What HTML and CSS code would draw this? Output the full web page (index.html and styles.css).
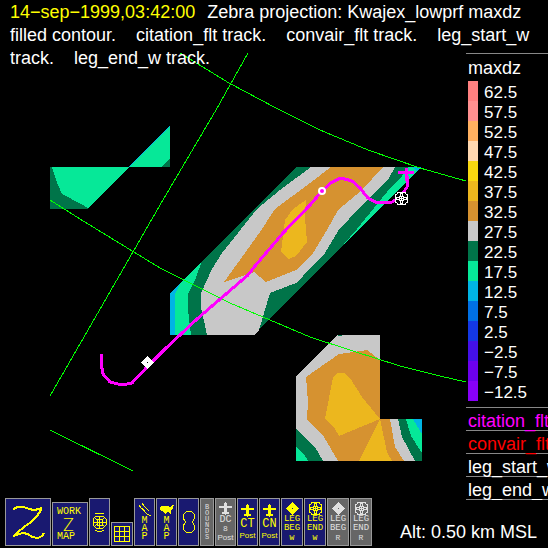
FILE: index.html
```html
<!DOCTYPE html>
<html lang="en">

<head>
    <meta charset="utf-8" />
    <title>Zebra</title>
    <meta name="viewport" content="width=device-width, initial-scale=1">
    <link rel="stylesheet" href="styles.css">
</head>

<body>
    <svg class="defs" aria-hidden="true">
        <symbol id="plane" viewBox="0 0 13 13">
            <path d="M6 0h1v1h1v3h5v2h-5v4h2v2h-3v1h-1v-1h-3v-2h2v-4h-5v-2h5v-3h1z" />
        </symbol>
        <symbol id="leg-beg" viewBox="0 0 13 13">
            <path d="M6 0h1v1h1v1h1v1h1v1h1v1h1v1h1v1h-1v1h-1v1h-1v1h-1v1h-1v1h-1v1h-1v-1h-1v-1h-1v-1h-1v-1h-1v-1h-1v-1h-1v-1h1v-1h1v-1h1v-1h1v-1h1v-1h1z M6 6v1h1v-1z" fill-rule="evenodd" />
        </symbol>
        <symbol id="leg-end" viewBox="0 0 13 13">
            <path d="M2 0h9v2h2v9h-2v2h-9v-2h-2v-9h2z M3 1v1h-1v1h-1v2h3v-1h1v-3z M8 1v3h1v1h3v-2h-1v-1h-1v-1z M1 8v2h1v1h1v1h2v-3h-1v-1z M9 8v1h-1v3h2v-1h1v-1h1v-2z M6 2v2h1v-2z M6 9v2h1v-2z M2 6v1h2v-1z M9 6v1h2v-1z M5 5v1h1v-1z M7 5v1h1v-1z M5 7v1h1v-1z M7 7v1h1v-1z" fill-rule="evenodd" />
        </symbol>
    </svg>

    <header class="title">
        <time>14−sep−1999,03:42:00</time>
        <span class="field">Zebra projection: Kwajex_lowprf maxdz filled contour.</span>
        <span class="field">citation_flt track.</span>
        <span class="field">convair_flt track.</span>
        <span class="field">leg_start_w track.</span>
        <span class="field">leg_end_w track.</span>
    </header>

    <main class="display">
        <svg class="map" viewBox="0 0 466 500" role="img" aria-label="maxdz filled contour">
            <!-- west cell -->
            <g shape-rendering="crispEdges">
                <path class="c22" d="M50 167H129L88 209H50z" />
                <path class="c17" d="M52 167H129L88 208L81 204L62 194L56 180z" />
                <path class="c17" d="M129 167L170 126V167z" />
                <path class="c22" d="M161 167L170 158V167z" />
                <path class="edge" d="M129 167L170 126" />
            </g>
            <!-- main cell -->
            <g shape-rendering="crispEdges">
                <path class="c22" d="M170 293L296 167H421L254 335H170z" />
                <path class="c12" d="M170 293L181 282L175 294V335H170z" />
                <path class="c17" d="M181 282L202 261L195 280L188 294V310L191 335H175V294z" />
                <path class="c17" d="M408 167H421L337 252L357 229L378 203L391 187L402 176z" />
                <path class="c12" d="M412 167H421L417 171z" />
                <path class="c27" d="M311 167H395L388 180L360 207L338 231L325 253L303 276L296 283L270 293L259 330L254 335H207L205 325L201 308V293L212 269L222 253L257 209L280 190z" />
                <path class="c32" d="M331 167H383L362 190L338 210L327 230L313 253L296 270L266 282L254 272L224 282L245 253L260 232L275 209L310 183z" />
                <path class="c37" d="M306 200L293 209L285 220L281 252L289 259L296 256L307 242L305 218z" />
            </g>
            <!-- south cell -->
            <g shape-rendering="crispEdges">
                <path class="c27" d="M296 377L337 335H380V419H422V461H296z" />
                <path class="c22" d="M338 335H342L341 336H337z" />
                <path class="c32" d="M306 377L339 354L367 350L380 360V419H390L395 447L404 461H338L324 437L307 419L308 402z" />
                <path class="c37" d="M333 377L338 373H344L350 378L362 397L380 419L339 436L334 427L325 419z" />
                <path class="c37" d="M380 419L359 461H392L387 452z" />
                <path class="c22" d="M398 419H422V461H415L402 437z" />
                <path class="c17" d="M406 419H422V453L411 436z" />
                <path class="c12" d="M413 419H422V434z" />
                <path class="c22" d="M296 429L315 447L323 461H296z" />
                <path class="c17" d="M296 447L304 454L308 461H296z" />
            </g>
            <!-- lat/lon grid -->
            <g class="grid">
                <path d="M180 53L229 83L274 107L320 130L368 150L420 168L466 181" />
                <path d="M248 53L216 110L160 205L50 396" />
                <path d="M50 200L80 219L160 268L230 303L310 337L353 351L400 366L440 376L466 382" />
                <path d="M50 430L133 471" />
            </g>
            <!-- aircraft track -->
            <path class="track" d="M102 354L101 363L103 374L110 382L122 385L132 383L147 367L165 349L197 319L248 275L255 266L283 233L310 205L322 191L332 182L341 178L352 181L360 188L368 198L377 203L392 202L401 196L407 187V176L406 168" />
            <path class="track" d="M398 172H414M406 168V181" />
            <circle class="fix" cx="322" cy="191" r="3" />
            <use href="#leg-beg" class="marker" x="141" y="356" width="13" height="13" />
            <rect x="396" y="193" width="11" height="11" />
            <use href="#leg-end" class="marker" x="395" y="192" width="13" height="13" />
        </svg>

        <aside class="legend">
            <section class="scale">
                <h2>maxdz</h2>
                <ul>
                    <li class="s62">62.5</li>
                    <li class="s57">57.5</li>
                    <li class="s52">52.5</li>
                    <li class="s47">47.5</li>
                    <li class="s42">42.5</li>
                    <li class="s37">37.5</li>
                    <li class="s32">32.5</li>
                    <li class="s27">27.5</li>
                    <li class="s22">22.5</li>
                    <li class="s17">17.5</li>
                    <li class="s12">12.5</li>
                    <li class="s7">7.5</li>
                    <li class="s2">2.5</li>
                    <li class="sm2">−2.5</li>
                    <li class="sm7">−7.5</li>
                    <li class="sm12">−12.5</li>
                </ul>
            </section>
            <ul class="tracks">
                <li class="citation">citation_flt</li>
                <li class="convair">convair_flt</li>
                <li>leg_start_w</li>
                <li>leg_end_w</li>
            </ul>
        </aside>
    </main>

    <footer class="toolbar">
        <button class="tool logo" aria-label="Zebra">
            <svg width="34" height="34" viewBox="0 0 34 34">
                <path class="thick" d="M2 5L4 3L7 2H13L18 4L23 5L28 4L31 3M30 3V5L26 11L20 17L13 22L7 27L2 32M2 31L5 30L12 28L17 29L21 32L27 33L31 31L33 28" />
            </svg>
        </button>
        <button class="tool work">
            <span>WORK</span>
            <span class="big">Z</span>
            <span>MAP</span>
        </button>
        <button class="tool" aria-label="Range rings">
            <svg width="15" height="20" viewBox="0 0 15 20">
                <path d="M3 2L5 1H10L12 2M3 18L5 19H10L12 18M1 7L4 4H11L14 7V13L11 16H4L1 13zM5 7H10V13H5zM7 4V16M1 10H14M2 5L5 8M13 5L10 8M2 15L5 12M13 15L10 12" />
            </svg>
        </button>
        <button class="tool short" aria-label="Grid">
            <svg width="16" height="16" viewBox="0 0 16 16">
                <path d="M0 0H16V16H0z M1 1V5H5V1z M6 1V5H10V1z M11 1V5H15V1z M1 6V10H5V6z M6 6V10H10V6z M11 6V10H15V6z M1 11V15H5V11z M6 11V15H10V11z M11 11V15H15V11z" class="solid" />
            </svg>
        </button>
        <button class="tool">
            <svg width="14" height="14" viewBox="0 0 14 14">
                <path d="M4 0L6 3L11 8M1 2L3 5L7 8M6 8L9 11L13 13" />
            </svg>
            <span class="stack">MAP</span>
        </button>
        <button class="tool">
            <svg width="14" height="14" viewBox="0 0 14 14">
                <path d="M1 3H8L9 4H11L12 2H14L13 5L11 8V11H10L9 9H7L5 11L4 9L1 8L0 5z" class="solid" />
            </svg>
            <span class="stack">MAP</span>
        </button>
        <button class="tool" aria-label="Overlay">
            <svg width="14" height="24" viewBox="0 0 14 24">
                <path d="M4.5 1.5H9.5L12.5 4.5V8.5L10.5 12L12.5 15.5V19.5L9.5 22.5H4.5L1.5 19.5V15.5L3.5 12L1.5 8.5V4.5z" />
            </svg>
        </button>
        <button class="tool off thin">
            <span class="stack small">BOUNDS</span>
        </button>
        <button class="tool off">
            <svg width="13" height="13"><use href="#plane" /></svg>
            <span class="dc">DC</span>
            <span class="sub">8</span>
            <span class="post">Post</span>
        </button>
        <button class="tool">
            <svg width="13" height="13"><use href="#plane" /></svg>
            <span class="code">CT</span>
            <span class="post">Post</span>
        </button>
        <button class="tool">
            <svg width="13" height="13"><use href="#plane" /></svg>
            <span class="code">CN</span>
            <span class="post">Post</span>
        </button>
        <button class="tool leg">
            <svg width="13" height="13"><use href="#leg-beg" /></svg>
            <span>LEG</span><span>BEG</span><span class="sub">W</span>
        </button>
        <button class="tool leg">
            <svg width="13" height="13"><use href="#leg-end" /></svg>
            <span>LEG</span><span>END</span><span class="sub">W</span>
        </button>
        <button class="tool leg off">
            <svg width="13" height="13"><use href="#leg-beg" /></svg>
            <span>LEG</span><span>BEG</span><span class="sub">R</span>
        </button>
        <button class="tool leg off">
            <svg width="13" height="13"><use href="#leg-end" /></svg>
            <span>LEG</span><span>END</span><span class="sub">R</span>
        </button>
        <output class="altitude">Alt: 0.50 km MSL</output>
    </footer>
</body>

</html>
```

FILE: styles.css
```css
* {
    box-sizing: border-box;
}

body {
    margin: 0;
    background-color: black;
    color: white;
    font-family: "Liberation Sans", Arial, sans-serif;
    font-size: 18px;
    line-height: 23px;
}

ul,
h2 {
    margin: 0;
    padding: 0;
    font-size: 18px;
    font-weight: normal;
    list-style: none;
}

.defs {
    display: none;
}

/* the title is written over the top of the map */
.title {
    position: absolute;
    top: 0;
    left: 0;
    right: 0;
    padding: 1px 4px 0 10px;
}

.title time {
    margin-right: 7px;
    color: yellow;
}

.field {
    margin-right: 15px;
}

.display {
    display: flex;
    align-items: flex-start;
}

.map {
    flex: 1;
    min-width: 0;
}

.c12 { fill: #00b4e4; }
.c17 { fill: #06e898; }
.c22 { fill: #007449; }
.c27 { fill: #c8c8c8; }
.c32 { fill: #d69230; }
.c37 { fill: #ecb71e; }

.edge {
    stroke: #00b4e4;
}

.grid {
    fill: none;
    stroke: #00ff00;
    shape-rendering: crispEdges;
}

.track {
    fill: none;
    stroke: magenta;
    stroke-width: 3;
    shape-rendering: crispEdges;
}

.fix {
    fill: magenta;
    stroke: white;
    stroke-width: 2;
}

.marker {
    fill: white;
}

.legend {
    width: 82px;
    padding-top: 53px;
    overflow: hidden;
    white-space: nowrap;
}

.scale {
    padding: 3px 0 6px 2px;
    border-top: 1px solid #888;
}

.scale h2 {
    height: 24px;
}

.scale li {
    height: 20px;
    padding-left: 6px;
    border-left-width: 10px;
    border-left-style: solid;
    font-size: 17px;
    line-height: 23px;
}

.s62 { border-color: #ff8080; }
.s57 { border-color: #ff9090; }
.s52 { border-color: #ffb060; }
.s47 { border-color: #ffd8b0; }
.s42 { border-color: #f8d810; }
.s37 { border-color: #ecb71e; }
.s32 { border-color: #d69230; }
.s27 { border-color: #c8c8c8; }
.s22 { border-color: #007449; }
.s17 { border-color: #06e898; }
.s12 { border-color: #00b4e4; }
.s7 { border-color: #0070e4; }
.s2 { border-color: #1438e4; }
.sm2 { border-color: #4410e8; }
.sm7 { border-color: #6c00ee; }
.sm12 { border-color: #8800f8; }

.tracks {
    border-top: 1px solid #888;
}

.tracks li {
    height: 23px;
    padding-left: 2px;
    border-bottom: 1px solid #888;
    line-height: 27px;
}

.citation {
    color: magenta;
}

.convair {
    color: red;
}

.toolbar {
    display: flex;
    align-items: flex-end;
    gap: 1px;
    margin-top: -2px;
    padding: 0 11px 2px 5px;
}

.tool {
    display: flex;
    flex-direction: column;
    align-items: center;
    justify-content: center;
    flex: none;
    width: 21px;
    height: 48px;
    padding: 0;
    border: 1px solid #999;
    border-radius: 0;
    background-color: #191970;
    color: yellow;
    font-family: "Liberation Mono", monospace;
    font-size: 9px;
    line-height: 9px;
}

.tool svg {
    flex: none;
    fill: currentColor;
    shape-rendering: crispEdges;
}

.tool svg > path {
    fill: none;
    stroke: currentColor;
}

.tool svg > .thick {
    stroke-width: 2;
}

.tool svg > .solid {
    fill: currentColor;
    fill-rule: evenodd;
    stroke: none;
}

.off {
    background-color: #666;
    color: #e0e0e0;
}

.logo {
    width: 46px;
}

.work {
    width: 36px;
    height: 44px;
    padding-left: 4px;
    align-items: flex-start;
    font-size: 10px;
}

.work .big {
    padding-left: 6px;
    font-family: Lato, "Liberation Sans", sans-serif;
    font-size: 18px;
    font-weight: 300;
    line-height: 16px;
}

.short {
    width: 22px;
    height: 24px;
}

.thin {
    width: 14px;
}

.stack {
    width: 1ch;
    font-size: 10px;
    line-height: 8px;
    word-break: break-all;
}

.small {
    font-size: 7px;
    line-height: 6px;
}

.leg {
    width: 22px;
}

.dc {
    font-size: 10px;
}

.sub {
    font-size: 8px;
}

.code {
    font-size: 12px;
    line-height: 14px;
}

.post {
    font-family: "Liberation Sans", Arial, sans-serif;
    font-size: 8px;
}

.altitude {
    margin-left: auto;
    padding-bottom: 2px;
    white-space: nowrap;
}
```
